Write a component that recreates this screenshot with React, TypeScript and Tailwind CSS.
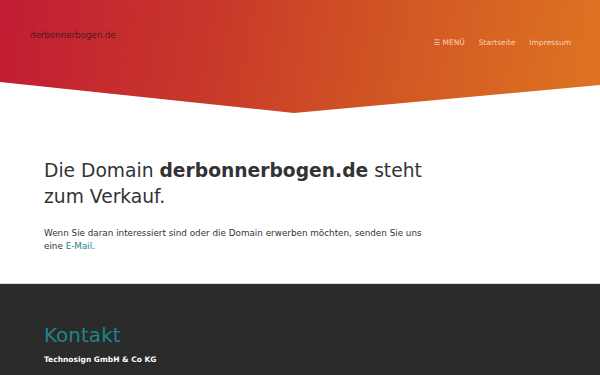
export default function App() {
  return (
    <div className="min-h-[375px] bg-white font-['DejaVu_Sans',sans-serif] text-[#333]">
      <header className="h-[113px] bg-[linear-gradient(100deg,#c11c34_0%,#c8382a_35%,#d05224_60%,#de7522_100%)] [clip-path:polygon(0_0,100%_0,100%_85px,49%_113px,0_82px)]">
        <div className="flex items-start justify-between pl-[30px] pr-[29px] pt-[29px]">
          <a className="text-[9px] tracking-[-0.2px] text-[#3a1616]/85">derbonnerbogen.de</a>
          <nav className="mt-[8px] flex items-center gap-[14px] text-[7.5px] text-[#f7d3b4]">
            <span>☰ MENÜ</span>
            <span>Startseite</span>
            <span>Impressum</span>
          </nav>
        </div>
      </header>

      <main className="px-[44px] pt-[45px] pb-[30px]">
        <h1 className="max-w-[400px] text-[18.7px] leading-[26px]">
          Die Domain <strong className="font-bold">derbonnerbogen.de</strong> steht zum Verkauf.
        </h1>
        <p className="mt-[17px] max-w-[385px] text-[8.8px] leading-[13px]">
          Wenn Sie daran interessiert sind oder die Domain erwerben möchten, senden Sie uns eine{' '}
          <a className="text-[#17888a]">E-Mail</a>.
        </p>
      </main>

      <footer className="border-t border-[#d8d8d8] bg-[#2b2b2b] px-[44px] pt-[38px] pb-[20px]">
        <h2 className="text-[20px] leading-[26px] text-[#1b868c]">Kontakt</h2>
        <p className="mt-[6px] text-[7.5px] font-bold text-white">Technosign GmbH &amp; Co KG</p>
      </footer>
    </div>
  );
}
